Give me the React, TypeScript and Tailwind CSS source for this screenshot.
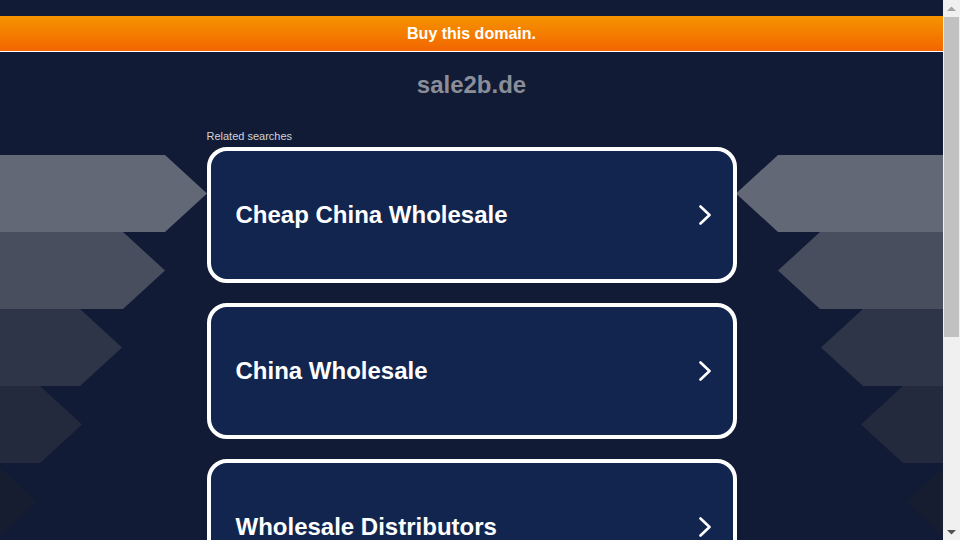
const searches = ["Cheap China Wholesale", "China Wholesale", "Wholesale Distributors"];

// left arrows: [right edge of body, colour]; right side is mirrored
const arrows = [
  { y: 155, end: 165, color: "#636877" },
  { y: 232, end: 123, color: "#494e5f" },
  { y: 309, end: 80, color: "#2f3548" },
  { y: 386, end: 40, color: "#232a3d" },
  { y: 463, end: -5, color: "#171d31" },
];

const Backdrop = () => (
  <svg className="absolute inset-0" width="943" height="540" viewBox="0 0 943 540">
    {arrows.map((a) => {
      const h = 77;
      const tip = a.end + 42;
      const left = `0,${a.y} ${a.end},${a.y} ${tip},${a.y + h / 2} ${a.end},${a.y + h} 0,${a.y + h}`;
      const right = `943,${a.y} ${943 - a.end},${a.y} ${943 - tip},${a.y + h / 2} ${943 - a.end},${a.y + h} 943,${a.y + h}`;
      return (
        <g key={a.y}>
          <polygon points={left} fill={a.color} />
          <polygon points={right} fill={a.color} />
        </g>
      );
    })}
  </svg>
);

const Scrollbar = () => (
  <div className="w-[17px] h-[540px] bg-[#f0f0f0] flex flex-col items-center">
    <div className="h-[17px] flex items-center justify-center">
      <svg width="9" height="6" viewBox="0 0 9 6">
        <polygon points="0,5 4.5,0.5 9,5" fill="#a3a3a3" />
      </svg>
    </div>
    <div className="w-[15px] h-[320px] bg-[#c1c1c1]" />
    <div className="flex-1" />
    <div className="h-[17px] flex items-center justify-center">
      <svg width="9" height="6" viewBox="0 0 9 6">
        <polygon points="0,1 9,1 4.5,5.5" fill="#505050" />
      </svg>
    </div>
  </div>
);

const App = () => {
  return (
    <div className="flex w-[960px] h-[540px] overflow-hidden font-['Liberation_Sans',Arial,sans-serif]">
      <div className="relative w-[943px] h-[540px] bg-[#111b35] overflow-hidden">
        <Backdrop />
        <div className="relative flex flex-col">
          <div className="h-4" />
          {/* Buy banner */}
          <div className="h-[36px] bg-gradient-to-b from-[#f59300] to-[#f26500] border-b border-white flex items-center justify-center">
            <span className="text-white font-bold text-[16px]">Buy this domain.</span>
          </div>
          <div className="h-[64px] flex items-center justify-center pt-[2px]">
            <span className="text-[#8a8e98] font-bold text-[24px]">sale2b.de</span>
          </div>

          <div className="w-[530px] mx-auto flex flex-col pt-[14px]">
            <div className="text-[#d0d3da] text-[11px] leading-[13px] h-[15px] mb-[2px]">Related searches</div>
            <div className="flex flex-col gap-5">
              {searches.map((s) => (
                <a
                  key={s}
                  className="h-[136px] rounded-[20px] border-4 border-white bg-[#12254f] flex items-center justify-between pl-[25px] pr-[22px]"
                >
                  <span className="text-white font-bold text-[24px]">{s}</span>
                  <svg width="12" height="20" viewBox="0 0 12 20">
                    <polyline
                      points="1.5,1.5 10.5,10 1.5,18.5"
                      fill="none"
                      stroke="white"
                      strokeWidth="2.6"
                      strokeLinecap="round"
                      strokeLinejoin="round"
                    />
                  </svg>
                </a>
              ))}
            </div>
          </div>
        </div>
      </div>
      <Scrollbar />
    </div>
  );
};

export default App;
